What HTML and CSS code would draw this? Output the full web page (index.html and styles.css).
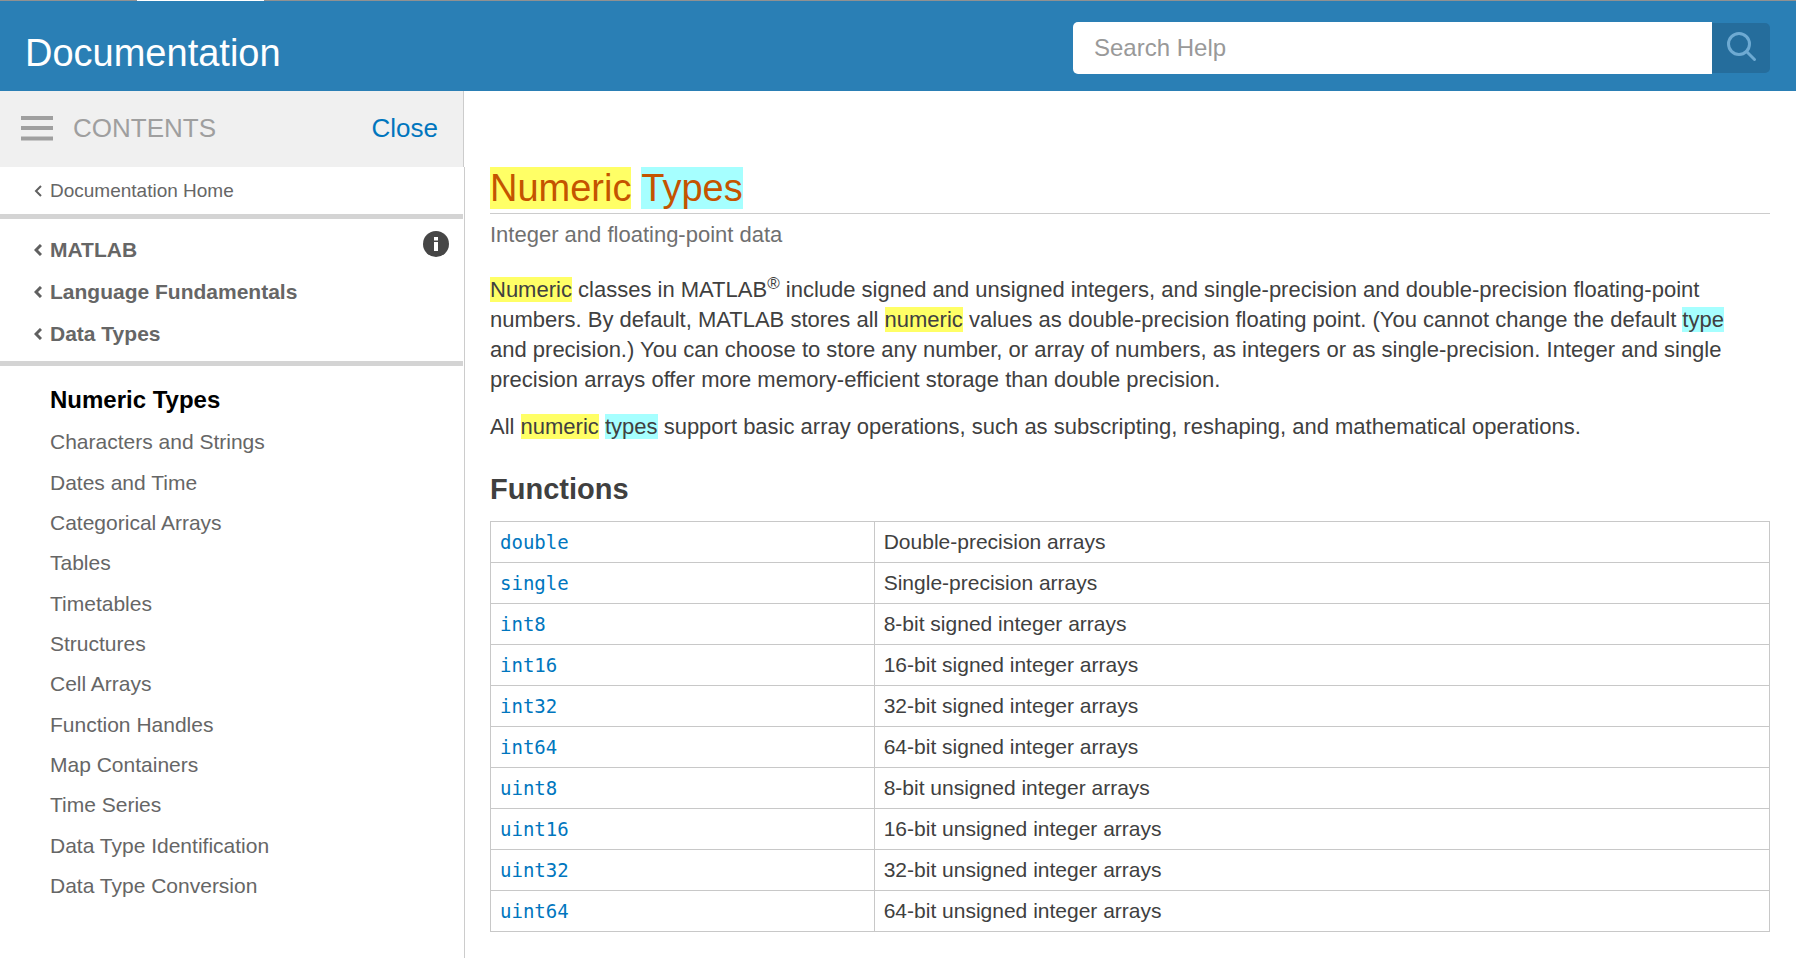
FILE: index.html
```html
<!DOCTYPE html>
<html lang="en">
<head>
<meta charset="utf-8">
<title>Numeric Types - Documentation</title>
<link rel="stylesheet" href="styles.css">
</head>
<body>
<div class="tab-strip"><div class="tab-active"></div></div>
<header class="header">
  <div class="site-title">Documentation</div>
  <form class="search" role="search">
    <input class="search-input" type="text" placeholder="Search Help" aria-label="Search Help">
    <button class="search-button" type="button" aria-label="Search">
      <svg width="32" height="32" viewBox="0 0 32 32" fill="none" stroke="#6eaad2" stroke-width="3" stroke-linecap="round"><circle cx="13" cy="13" r="10.5"/><path d="M20.5 20.5 28.5 28.5"/></svg>
    </button>
  </form>
</header>
<div class="layout">
  <aside class="sidebar">
    <div class="contents-bar">
      <svg class="menu-icon" width="32" height="25" viewBox="0 0 32 25" fill="#9f9f9f"><path d="M0 0h32v4H0zM0 10h32v4H0zM0 20.500h32v4H0z"/></svg>
      <span class="contents-label">CONTENTS</span>
      <button class="close" type="button">Close</button>
    </div>
    <div class="sidebar-body">
      <div class="home">
        <a class="crumb" href="#"><svg class="chevron" width="8" height="12" viewBox="0 0 8 12"><path d="M7 1 2 6l5 5"/></svg>Documentation Home</a>
      </div>
      <nav class="trail" aria-label="Breadcrumb">
        <div class="trail-links">
          <a class="crumb crumb-bold" href="#"><svg class="chevron" width="8" height="12" viewBox="0 0 8 12"><path d="M7 1 2 6l5 5"/></svg>MATLAB</a>
          <a class="crumb crumb-bold" href="#"><svg class="chevron" width="8" height="12" viewBox="0 0 8 12"><path d="M7 1 2 6l5 5"/></svg>Language Fundamentals</a>
          <a class="crumb crumb-bold" href="#"><svg class="chevron" width="8" height="12" viewBox="0 0 8 12"><path d="M7 1 2 6l5 5"/></svg>Data Types</a>
        </div>
        <button class="info" type="button" aria-label="Information">
          <svg width="26" height="26" viewBox="0 0 26 26"><circle cx="13" cy="13" r="13" fill="#464646"/><path d="M11 6h4v3.500h-4zM11 11h4v9h-4z" fill="#fff"/></svg>
        </button>
      </nav>
      <ul class="topics">
        <li><a class="topic topic-current" href="#">Numeric Types</a></li>
        <li><a class="topic" href="#">Characters and Strings</a></li>
        <li><a class="topic" href="#">Dates and Time</a></li>
        <li><a class="topic" href="#">Categorical Arrays</a></li>
        <li><a class="topic" href="#">Tables</a></li>
        <li><a class="topic" href="#">Timetables</a></li>
        <li><a class="topic" href="#">Structures</a></li>
        <li><a class="topic" href="#">Cell Arrays</a></li>
        <li><a class="topic" href="#">Function Handles</a></li>
        <li><a class="topic" href="#">Map Containers</a></li>
        <li><a class="topic" href="#">Time Series</a></li>
        <li><a class="topic" href="#">Data Type Identification</a></li>
        <li><a class="topic" href="#">Data Type Conversion</a></li>
      </ul>
    </div>
  </aside>
  <main class="main">
    <h1 class="title"><mark class="hit">Numeric</mark> <mark class="hit hit-alt">Types</mark></h1>
    <p class="purpose">Integer and floating-point data</p>
    <p class="text"><mark class="hit">Numeric</mark> classes in MATLAB<sup class="reg">®</sup> include signed and unsigned integers, and single-precision and double-precision floating-point numbers. By default, MATLAB stores all <mark class="hit">numeric</mark> values as double-precision floating point. (You cannot change the default <mark class="hit hit-alt">type</mark> and precision.) You can choose to store any number, or array of numbers, as integers or as single-precision. Integer and single precision arrays offer more memory-efficient storage than double precision.</p>
    <p class="text">All <mark class="hit">numeric</mark> <mark class="hit hit-alt">types</mark> support basic array operations, such as subscripting, reshaping, and mathematical operations.</p>
    <h2 class="section">Functions</h2>
    <table class="functions">
      <tbody>
        <tr><td class="name"><a class="code" href="#">double</a></td><td>Double-precision arrays</td></tr>
        <tr><td class="name"><a class="code" href="#">single</a></td><td>Single-precision arrays</td></tr>
        <tr><td class="name"><a class="code" href="#">int8</a></td><td>8-bit signed integer arrays</td></tr>
        <tr><td class="name"><a class="code" href="#">int16</a></td><td>16-bit signed integer arrays</td></tr>
        <tr><td class="name"><a class="code" href="#">int32</a></td><td>32-bit signed integer arrays</td></tr>
        <tr><td class="name"><a class="code" href="#">int64</a></td><td>64-bit signed integer arrays</td></tr>
        <tr><td class="name"><a class="code" href="#">uint8</a></td><td>8-bit unsigned integer arrays</td></tr>
        <tr><td class="name"><a class="code" href="#">uint16</a></td><td>16-bit unsigned integer arrays</td></tr>
        <tr><td class="name"><a class="code" href="#">uint32</a></td><td>32-bit unsigned integer arrays</td></tr>
        <tr><td class="name"><a class="code" href="#">uint64</a></td><td>64-bit unsigned integer arrays</td></tr>
      </tbody>
    </table>
  </main>
</div>
</body>
</html>
```
FILE: styles.css
```css
* { box-sizing: border-box; }
body {
  margin: 0;
  min-height: 100vh;
  display: flex;
  flex-direction: column;
  background: #fff;
  color: #404040;
  font-family: "Liberation Sans", Arial, sans-serif;
  font-size: 21px;
}
a { text-decoration: none; }
button { padding: 0; border: 0; background: none; font: inherit; cursor: pointer; }
svg { display: block; flex: none; }

.tab-strip { height: 1px; background: #919191; padding-left: 137px; }
.tab-active { width: 127px; height: 1px; background: #fff; }

.header {
  height: 90px;
  padding: 0 26px 0 25px;
  display: flex;
  align-items: center;
  justify-content: space-between;
  background: #2a7fb5;
}
.site-title { color: #fff; font-size: 38px; line-height: 44px; padding-top: 14px; }
.search { display: flex; align-items: center; width: 697px; padding-bottom: 6px; margin-top: 10px; height: 58px; }
.search-input {
  flex: 1;
  min-width: 0;
  height: 52px;
  padding: 0 21px;
  border: 0;
  border-radius: 5px 0 0 5px;
  background: #fff;
  color: #404040;
  font: 24px "Liberation Sans", Arial, sans-serif;
}
.search-input::placeholder { color: #999; opacity: 1; }
.search-button {
  width: 58px;
  height: 50px;
  padding: 0 0 2px 14px;
  border-radius: 0 5px 5px 0;
  background: #256d9c;
}

.layout { flex: 1; display: flex; }
.sidebar { width: 465px; flex: none; display: flex; flex-direction: column; }
.sidebar-body { flex: 1; border-right: 1px solid #ccc; }
.contents-bar {
  height: 76px;
  display: flex;
  align-items: center;
  margin-right: 1px;
  padding: 0 25px 2px 21px;
  border-right: 1px solid #ccc;
  background: #f0f0f0;
  font-size: 26px;
}
.contents-label { flex: 1; padding-left: 20px; color: #9f9f9f; }
.close { color: #0076be; }
.home { height: 52px; padding-left: 34px; border-bottom: 5px solid #d4d4d4; margin-right: 1px; }
.crumb {
  display: flex;
  align-items: center;
  gap: 8px;
  color: #666;
  font-size: 19px;
  line-height: 47px;
}
.crumb-bold { font-size: 21px; font-weight: bold; line-height: 42px; }
.chevron { fill: none; stroke: #606060; stroke-width: 2; }
.crumb-bold .chevron { stroke-width: 3; }
.trail {
  display: flex;
  justify-content: space-between;
  align-items: flex-start;
  padding: 10px 14px 6px 34px;
  border-bottom: 5px solid #d4d4d4;
  margin-right: 1px;
}
.info { margin-top: 2px; }
.topics {
  display: grid;
  align-content: space-between;
  min-height: 540px;
  list-style: none;
  margin: 0;
  padding: 12px 20px 0 50px;
}
.topic { display: block; color: #666; line-height: 40px; }
.topic-current { color: #000; font-size: 24px; font-weight: bold; line-height: 44px; }

.main { flex: 1; min-width: 0; padding: 75px 26px 20px 25px; }
.title {
  margin: 0;
  padding-bottom: 3px;
  border-bottom: 1px solid #ccc;
  color: #c45400;
  font-size: 38px;
  font-weight: normal;
  line-height: 44px;
}
.hit { background: #ff6; color: inherit; }
.hit-alt { background: #a6ffff; }
.purpose { margin: 6px 0 25px; color: #707070; font-size: 22px; line-height: 30px; }
.text { margin: 0 0 17px; padding-right: 8px; font-size: 22px; line-height: 30px; }
.reg { font-size: 17px; line-height: 0; vertical-align: 8px; }
.section { margin: 29px 0 14px; font-size: 29px; line-height: 36px; }
.functions { width: 100%; border-collapse: collapse; table-layout: fixed; }
.functions td { height: 41px; padding: 0 9px; border: 1px solid #c8c8c8; line-height: 24px; }
.name { width: 30%; }
.code { color: #0076be; font-family: "DejaVu Sans Mono", monospace; font-size: 19px; }
```
